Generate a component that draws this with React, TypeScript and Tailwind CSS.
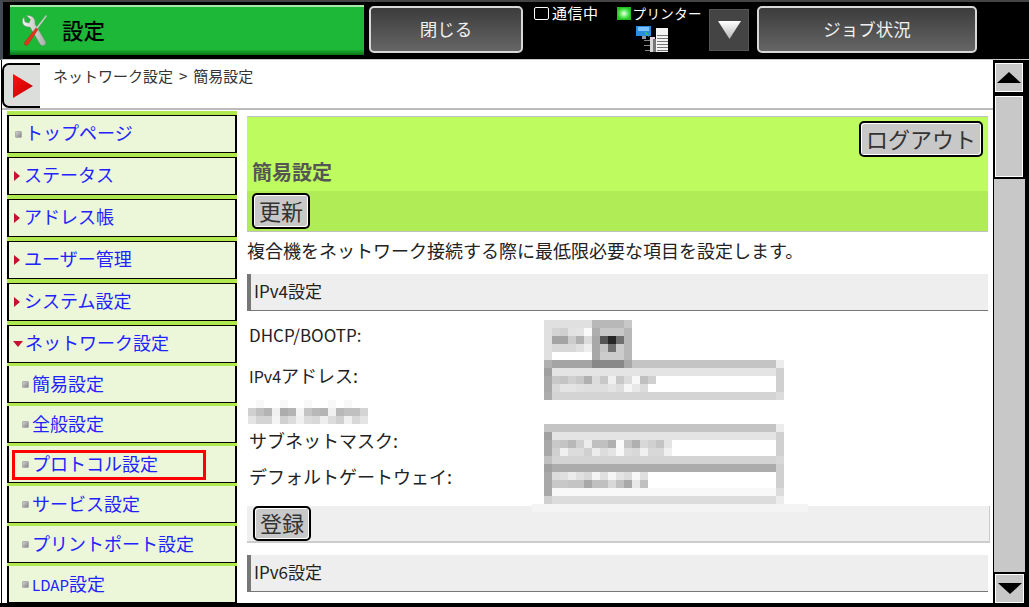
const font = { fontFamily: '"Noto Sans CJK JP", "Liberation Sans", sans-serif' };

type Seg = [number, string];

function Mosaic({ rows, width, height, cell = 8 }: { rows: Seg[][]; width: number; height: number; cell?: number }) {
  return (
    <svg width={width} height={height} className="block shrink-0" shapeRendering="crispEdges">
      {rows.map((row, r) => {
        let x = 0;
        return row.map(([n, c], i) => {
          const el = <rect key={`${r}-${i}`} x={x * cell} y={r * cell} width={n * cell} height={cell} fill={c} />;
          x += n;
          return el;
        });
      })}
    </svg>
  );
}

const mosaicA: Seg[][] = [
  [[6, '#e0e0e0'], [4, '#b8b8b8'], [1, '#c8c8c8']],
  [[1, '#e0e0e0'], [1, '#d4d4d4'], [1, '#d0d0d0'], [1, '#e2e2e2'], [1, '#e4e4e4'], [1, '#fafafa'], [1, '#aeaeae'], [3, '#c8c8c8'], [1, '#b8b8b8']],
  [[1, '#e0e0e0'], [2, '#a4a4a4'], [1, '#cccccc'], [1, '#b0b0b0'], [1, '#dcdcdc'], [1, '#a8a8a8'], [1, '#555555'], [1, '#262626'], [1, '#707070'], [1, '#b8b8b8']],
  [[1, '#e0e0e0'], [3, '#d8d8d8'], [1, '#e0e0e0'], [1, '#eeeeee'], [1, '#a8a8a8'], [1, '#c4c4c4'], [1, '#707070'], [1, '#cccccc'], [1, '#b8b8b8']],
  [[1, '#e0e0e0'], [5, '#ffffff'], [1, '#a8a8a8'], [3, '#cccccc'], [1, '#b8b8b8']],
  [[1, '#b0b0b0'], [5, '#a4a4a4'], [4, '#888888'], [1, '#a8a8a8'], [18, '#c4c4c4'], [1, '#ececec']],
  [[1, '#a0a0a0'], [28, '#e4e4e4'], [1, '#d0d0d0']],
  [[1, '#a8a8a8'], [1, '#c8c8c8'], [1, '#c4c4c4'], [1, '#d0d0d0'], [1, '#c8c8c8'], [1, '#b0b0b0'], [1, '#dcdcdc'], [1, '#c8c8c8'], [1, '#f0f0f0'], [1, '#c8c8c8'], [1, '#dcdcdc'], [1, '#f8f8f8'], [1, '#c0c0c0'], [1, '#d0d0d0'], [15, '#ffffff'], [1, '#d0d0d0']],
  [[1, '#a8a8a8'], [1, '#d8d8d8'], [2, '#e4e4e4'], [1, '#e0e0e0'], [3, '#dedede'], [1, '#e4e4e4'], [1, '#dddddd'], [1, '#f6f6f6'], [1, '#e8e8e8'], [1, '#dcdcdc'], [16, '#ffffff'], [1, '#d0d0d0']],
  [[1, '#acacac'], [28, '#d4d4d4'], [1, '#dcdcdc']],
];

const mosaicB: Seg[][] = [
  [[1, '#c4c4c4'], [28, '#c4c4c4'], [1, '#ececec']],
  [[1, '#a0a0a0'], [28, '#e4e4e4'], [1, '#d0d0d0']],
  [[1, '#a8a8a8'], [1, '#c8c8c8'], [1, '#c4c4c4'], [1, '#b8b8b8'], [1, '#d0d0d0'], [1, '#ececec'], [2, '#c0c0c0'], [1, '#b0b0b0'], [1, '#fafafa'], [1, '#c4c4c4'], [1, '#b0b0b0'], [1, '#d8d8d8'], [1, '#d0d0d0'], [1, '#c4c4c4'], [1, '#e4e4e4'], [13, '#ffffff'], [1, '#d0d0d0']],
  [[1, '#a8a8a8'], [1, '#d0d0d0'], [1, '#f0f0f0'], [2, '#dcdcdc'], [1, '#d0d0d0'], [1, '#ececec'], [1, '#dcdcdc'], [1, '#e4e4e4'], [1, '#f8f8f8'], [1, '#dcdcdc'], [1, '#d8d8d8'], [1, '#f0f0f0'], [2, '#d8d8d8'], [1, '#f0f0f0'], [13, '#ffffff'], [1, '#d0d0d0']],
  [[1, '#c0c0c0'], [28, '#d4d4d4'], [1, '#d8d8d8']],
  [[1, '#a0a0a0'], [28, '#acacac'], [1, '#d0d0d0']],
  [[1, '#a8a8a8'], [1, '#dcdcdc'], [1, '#e0e0e0'], [1, '#ececec'], [1, '#e0e0e0'], [1, '#d8d8d8'], [1, '#f4f4f4'], [1, '#e0e0e0'], [1, '#f6f6f6'], [1, '#e4e4e4'], [1, '#dcdcdc'], [1, '#f8f8f8'], [1, '#e0e0e0'], [16, '#ffffff'], [1, '#d0d0d0']],
  [[1, '#a8a8a8'], [2, '#c8c8c8'], [2, '#c4c4c4'], [1, '#a8a8a8'], [2, '#c0c0c0'], [1, '#d8d8d8'], [1, '#c0c0c0'], [1, '#a8a8a8'], [1, '#e8e8e8'], [1, '#c0c0c0'], [16, '#ffffff'], [1, '#d0d0d0']],
  [[1, '#a8a8a8'], [28, '#f8f8f8'], [1, '#dcdcdc']],
  [[1, '#d0d0d0'], [28, '#dcdcdc'], [1, '#ececec']],
];

const mosaicC: Seg[][] = [
  [[1, '#ffffff'], [1, '#f8f8f8'], [2, '#ffffff'], [1, '#f8f8f8'], [2, '#ffffff'], [1, '#f8f8f8'], [2, '#ffffff'], [1, '#f8f8f8'], [1, '#ffffff'], [1, '#f8f8f8'], [2, '#ffffff']],
  [[1, '#d0d0d0'], [1, '#c0c0c0'], [1, '#b4b4b4'], [1, '#f0f0f0'], [1, '#acacac'], [1, '#b4b4b4'], [1, '#f4f4f4'], [1, '#c4c4c4'], [1, '#b8b8b8'], [1, '#b4b4b4'], [1, '#f0f0f0'], [1, '#b8b8b8'], [2, '#c0c0c0'], [1, '#d4d4d4']],
  [[1, '#e4e4e4'], [2, '#d4d4d4'], [1, '#f4f4f4'], [1, '#d0d0d0'], [1, '#dcdcdc'], [1, '#f0f0f0'], [1, '#dcdcdc'], [1, '#d8d8d8'], [1, '#eeeeee'], [1, '#dcdcdc'], [1, '#d0d0d0'], [1, '#f0f0f0'], [1, '#d8d8d8'], [1, '#e4e4e4']],
];

function ToolsIcon() {
  return (
    <svg width="28" height="34" viewBox="0 0 28 34" className="shrink-0">
      <defs>
        <linearGradient id="steel" x1="0" y1="0" x2="1" y2="0">
          <stop offset="0" stopColor="#f4f4f4" />
          <stop offset="1" stopColor="#a8b0a8" />
        </linearGradient>
      </defs>
      <path d="M3 3 C0.5 6 1 10 4 12 C6 13 8 13 9 13 L19 30 C21 33.5 26 31 24.5 27.5 L14 10 C14.5 7 13.5 3.5 10 2 C8.5 1.4 7 1.3 5.5 1.7 L9.5 5.5 L8 9 L4 8 Z" fill="url(#steel)" stroke="#6f8a72" strokeWidth="0.5" />
      <path d="M25 1 L26 2 L16 15.5 L14.5 14.5 Z" fill="#d0d6d0" stroke="#7d8a7d" strokeWidth="0.3" />
      <path d="M15 14 L17 15.5 L7 30.5 C5.5 32.5 2.5 31 3.5 28.5 Z" fill="#e0361c" stroke="#a02a14" strokeWidth="0.4" />
    </svg>
  );
}

function PrinterIcon() {
  return (
    <svg width="34" height="27" viewBox="0 0 34 27" className="shrink-0" shapeRendering="crispEdges">
      <rect x="0" y="1" width="15" height="10" fill="#2a8de0" />
      <rect x="2" y="2" width="11" height="4" fill="#7cc4ff" />
      <rect x="6" y="11" width="4" height="3" fill="#8a9aa8" />
      <path d="M9 8 L15 14 L13 15 L17 17 L16 12 L14 13 L10 7 Z" fill="#3be03b" shapeRendering="auto" />
      <rect x="8" y="15" width="6" height="1" fill="#888888" />
      <rect x="8" y="20" width="6" height="1" fill="#888888" />
      <rect x="9" y="25" width="6" height="1" fill="#888888" />
      <rect x="14" y="12" width="5" height="15" fill="#d8d8d8" />
      <rect x="17" y="14" width="3" height="13" fill="#777777" />
      <rect x="20" y="3" width="12" height="24" fill="#f4f4f4" />
      <rect x="21" y="10" width="11" height="1" fill="#777777" />
      <rect x="21" y="13" width="11" height="1" fill="#777777" />
      <rect x="21" y="16" width="11" height="1" fill="#777777" />
      <rect x="21" y="19" width="11" height="1" fill="#777777" />
      <rect x="21" y="22" width="11" height="1" fill="#777777" />
      <rect x="21" y="25" width="11" height="1" fill="#777777" />
    </svg>
  );
}

function DarkButton({ label, className }: { label: string; className: string }) {
  return (
    <div className={`h-[47px] shrink-0 flex items-center justify-center rounded-[5px] border-2 border-[#d8d8d8] bg-gradient-to-b from-[#3c3c3c] to-[#666666] text-[17.5px] text-[#f0f0f0] ${className}`}>
      {label}
    </div>
  );
}

function GreyButton({ label, className }: { label: string; className: string }) {
  return (
    <div className={`flex items-center justify-center rounded-[5px] border-2 border-black bg-[#c8c8c8] pb-[3px] text-[22px] leading-none text-[#333333] shadow-[inset_1px_1px_0_#ffffff,inset_-1px_-1px_0_#ffffff] ${className}`}>
      {label}
    </div>
  );
}

function Bullet({ kind }: { kind: 'square' | 'right' | 'down' }) {
  if (kind === 'square') {
    return <span className="block w-[7px] h-[7px] rounded-[1px] bg-gradient-to-br from-[#d0d0d0] to-[#888888] border border-[#b0b0b0]" />;
  }
  if (kind === 'right') {
    return (
      <svg width="6" height="10" viewBox="0 0 6 10" className="block">
        <path d="M0 0 L6 5 L0 10 Z" fill="#c41230" />
      </svg>
    );
  }
  return (
    <svg width="10" height="6" viewBox="0 0 10 6" className="block">
      <path d="M0 0 L10 0 L5 6 Z" fill="#c41230" />
    </svg>
  );
}

function TopItem({ label, kind }: { label: string; kind: 'square' | 'right' | 'down' }) {
  return (
    <div className="h-[42px] pt-[4px] bg-[#b0e84f]">
      <div className="h-[38px] flex items-center border-x-2 border-y border-black bg-[#ecf6d9] pb-[3px] text-[18px] text-[#2222ff]">
        <div className={`flex items-center justify-center mt-[3px] ${kind === 'down' ? 'w-[15px] ml-[1px]' : kind === 'square' ? 'w-[14px] ml-[2px]' : 'w-[14px] ml-[1px]'}`}>
          <Bullet kind={kind} />
        </div>
        <span className={kind === 'down' ? 'ml-[0px]' : 'ml-[0px]'}>{label}</span>
      </div>
    </div>
  );
}

function SubItem({ label, marked, narrowLatin }: { label: string; marked?: boolean; narrowLatin?: string }) {
  return (
    <div className="h-[40px] pt-[3px] bg-[#b0e84f]">
      <div className="relative h-[37px] flex items-center border-x-2 border-b border-black bg-[#ecf6d9] pb-[2px] text-[18px] text-[#2222ff]">
        <div className="w-[12px] ml-[13px] mr-[-2px] mt-[2px]">
          <Bullet kind="square" />
        </div>
        <span>
          {narrowLatin && <span className="text-[15px]">{narrowLatin}</span>}
          {label}
        </span>
        {marked && <div className="absolute left-[3px] top-[4px] w-[194px] h-[30px] border-[3px] border-[#ff0000]" />}
      </div>
    </div>
  );
}

function SectionHeader({ label }: { label: string }) {
  return (
    <div className="h-[37px] flex items-center border-l-4 border-b border-[#777777] bg-[#eeeeee] pl-[3px] pb-[3px] text-[17px] text-[#222222]">
      {label}
    </div>
  );
}

export default function App() {
  return (
    <div className="w-[1029px] h-[607px] bg-black flex flex-col overflow-hidden" style={font}>
      {/* top bar */}
      <div className="h-[60px] shrink-0 flex border-t-2 border-[#444444] border-b border-b-[#cccccc] border-l-[3px] border-l-[#444a55]">
        <div className="ml-[7px] mt-[3px] w-[354px] h-[50px] flex items-center pl-[11px] bg-gradient-to-b from-[#1db837] via-[#1db837] via-[88%] to-[#0b7412] border-t-2 border-[#a8e8a8]">
          <ToolsIcon />
          <span className="ml-[13px] pb-[2px] text-[21.5px] font-medium text-black">設定</span>
        </div>
        <DarkButton label="閉じる" className="ml-[5px] mt-[4px] w-[154px]" />
        <div className="ml-[11px] w-[175px] flex text-white">
          <div className="flex items-center h-[13px] mt-[5px]">
            <span className="block w-[15px] h-[13px] rounded-[2px] border border-white" />
            <span className="ml-[3px] text-[15px] tracking-[0.5px]">通信中</span>
          </div>
          <div className="ml-[18px] flex flex-col items-start">
            <div className="flex items-center h-[13px] mt-[5px]">
              <span className="block w-[14px] h-[13px] bg-radial from-[#e8ffe8] via-[#50e850] to-[#10b010] border border-[#20c020]" />
              <span className="ml-[2px] text-[13.5px] tracking-[0.4px]">プリンター</span>
            </div>
            <div className="ml-[19px] mt-[5px]">
              <PrinterIcon />
            </div>
          </div>
        </div>
        <div className="mt-[7px] w-[40px] h-[42px] flex items-center justify-center border border-[#555555] bg-[#444444]">
          <svg width="23" height="18" viewBox="0 0 23 18">
            <defs>
              <linearGradient id="tri" x1="0" y1="0" x2="0" y2="1">
                <stop offset="0" stopColor="#ffffff" />
                <stop offset="1" stopColor="#b8b8b8" />
              </linearGradient>
            </defs>
            <path d="M0 0 L23 0 L11.5 18 Z" fill="url(#tri)" />
          </svg>
        </div>
        <DarkButton label="ジョブ状況" className="ml-[8px] mt-[4px] w-[220px]" />
      </div>

      {/* body */}
      <div className="h-[543px] shrink-0 flex">
        <div className="w-[993px] bg-white pl-[1px]">
          <div className="h-full flex flex-col bg-white border-l border-l-black">
            {/* breadcrumb */}
            <div className="h-[50px] shrink-0 flex items-start border-b-2 border-[#bbbbbb] bg-white">
              <div className="mt-[3px] w-[38px] h-[45px] flex items-center justify-center rounded-l-[7px] border-y-2 border-l-2 border-black bg-[#dcdedc]">
                <svg width="20" height="24" viewBox="0 0 20 24" className="ml-[2px]">
                  <defs>
                    <linearGradient id="red" x1="0" y1="0" x2="1" y2="1">
                      <stop offset="0" stopColor="#ff1010" />
                      <stop offset="1" stopColor="#c00000" />
                    </linearGradient>
                  </defs>
                  <path d="M0 0 L20 12 L0 24 Z" fill="url(#red)" />
                </svg>
              </div>
              <span className="ml-[13px] mt-[5px] text-[15px] leading-[22px] text-[#333333]">
                ネットワーク設定<span className="mx-[6px]">&gt;</span>簡易設定
              </span>
            </div>

            <div className="h-[493px] flex">
              {/* sidebar */}
              <div className="w-[245px] shrink-0 pt-[1px] pl-[5px] pr-[10px] flex flex-col">
                <TopItem label="トップページ" kind="square" />
                <TopItem label="ステータス" kind="right" />
                <TopItem label="アドレス帳" kind="right" />
                <TopItem label="ユーザー管理" kind="right" />
                <TopItem label="システム設定" kind="right" />
                <TopItem label="ネットワーク設定" kind="down" />
                <SubItem label="簡易設定" />
                <SubItem label="全般設定" />
                <SubItem label="プロトコル設定" marked />
                <SubItem label="サービス設定" />
                <SubItem label="プリントポート設定" />
                <SubItem narrowLatin="LDAP" label="設定" />
              </div>

              {/* content */}
              <div className="w-[741px] shrink-0 pt-[6px] flex flex-col">
                <div className="h-[116px] shrink-0 flex flex-col border-y border-[#c0c0c0]">
                  <div className="h-[74px] bg-[#bdfb5f] flex flex-col">
                    <div className="flex justify-end pt-[4px] pr-[5px]">
                      <GreyButton label="ログアウト" className="w-[124px] h-[36px]" />
                    </div>
                    <div className="pl-[5px] text-[20px] font-bold leading-[30px] text-[#555555]">簡易設定</div>
                  </div>
                  <div className="flex-1 bg-[#b0ec55] flex items-center pl-[5px]">
                    <GreyButton label="更新" className="w-[58px] h-[36px]" />
                  </div>
                </div>

                <div className="h-[42px] shrink-0 flex items-center pb-[5px] text-[18px] text-[#222222]">
                  複合機をネットワーク接続する際に最低限必要な項目を設定します。
                </div>

                <SectionHeader label="IPv4設定" />

                <div className="h-[195px] shrink-0 pt-[9px] flex text-[18px] text-[#222222]">
                  <div className="w-[297px] shrink-0 flex flex-col">
                    <div className="h-[32px] flex items-center pl-[2px] pb-[2px] text-[17px]">DHCP/BOOTP:</div>
                    <div className="mt-[9px] h-[32px] flex items-center pl-[2px] pb-[3px]">
                      <span><span className="text-[16px]">IPv4</span>アドレス:</span>
                    </div>
                    <div className="mt-[7px] ml-[1px]">
                      <Mosaic rows={mosaicC} width={120} height={24} />
                    </div>
                    <div className="mt-[2px] h-[32px] flex items-center pl-[2px] pb-[3px]">サブネットマスク:</div>
                    <div className="mt-[4px] h-[32px] flex items-center pl-[2px] pb-[3px]">デフォルトゲートウェイ:</div>
                  </div>
                  <div className="flex flex-col">
                    <Mosaic rows={mosaicA} width={240} height={80} />
                    <div className="h-[24px]" />
                    <Mosaic rows={mosaicB} width={240} height={80} />
                  </div>
                </div>

                <div className="relative h-[37px] shrink-0 flex items-center w-[743px] pl-[6px] bg-[#efefef] border-r border-b-2 border-[#cccccc]">
                  <div className="absolute left-[285px] top-[-2px] w-[276px] h-[8px] bg-[#f4f4f4]" />
                  <GreyButton label="登録" className="relative w-[58px] h-[35px]" />
                </div>

                <div className="h-[12px] shrink-0" />
                <SectionHeader label="IPv6設定" />
              </div>
            </div>
          </div>
        </div>

        {/* scrollbar */}
        <div className="w-[36px] shrink-0 flex flex-col pl-[1px] pt-[3px] pr-[4px]">
          <div className="ml-[1px] w-[28px] h-[29px] shrink-0 flex items-center justify-center bg-[#c8c8c8] border border-white">
            <svg width="24" height="11" viewBox="0 0 24 11"><path d="M0 11 L12 0 L24 11 Z" fill="#000000" /></svg>
          </div>
          <div className="h-[4px] shrink-0" />
          <div className="ml-[1px] w-[28px] h-[81px] shrink-0 bg-[#c8c8c8] border border-white" />
          <div className="h-[2px] shrink-0" />
          <div className="w-[31px] flex-1 bg-[#c8c8c8]" />
          <div className="h-[2px] shrink-0" />
          <div className="ml-[1px] w-[29px] h-[29px] shrink-0 flex items-center justify-center bg-[#c8c8c8] border border-white">
            <svg width="24" height="11" viewBox="0 0 24 11"><path d="M0 0 L24 0 L12 11 Z" fill="#000000" /></svg>
          </div>
        </div>
      </div>
    </div>
  );
}
